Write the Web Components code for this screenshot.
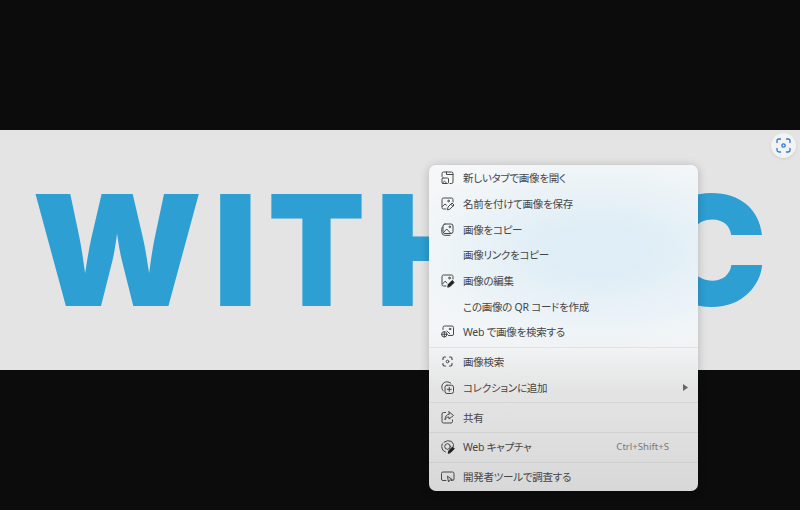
<!DOCTYPE html>
<html lang="ja"><head><meta charset="utf-8"><title>Context menu</title>
<style>
html,body{margin:0;height:100%;background:#0c0c0c}
body{overflow:hidden;font-family:"Noto Sans","Noto Sans CJK JP",sans-serif}
</style></head><body>
<image-page></image-page>
<template id="t-page"><style>
:host{display:flex;flex-direction:column;width:800px;height:510px;position:relative;overflow:hidden;background:#0c0c0c}
.pad{height:130px;flex:none}
.banner{height:240px;flex:none;background:#e4e4e4;box-sizing:border-box;padding:0 0 0 32px;display:flex;align-items:center}
.word{display:flex;align-items:center;font:900 153.500px/1 Inter,"Liberation Sans",sans-serif;color:#2d9fd3;margin-top:2px}
.word span{display:block}
.lens{position:absolute;left:771px;top:133px}
context-menu{position:absolute;left:429px;top:165px}
</style>
<div class="pad"></div>
<div class="banner"><div class="word"><span style="transform:scaleX(1.025);transform-origin:4px 0">W</span><span style="margin-left:15px">I</span><span style="margin-left:9px;transform:scaleX(.93);transform-origin:8px 0">T</span><span style="margin-left:3px">H</span><span style="width:162px"></span><span>C</span></div></div>
<lens-button class="lens"></lens-button>
<context-menu></context-menu>
</template>
<template id="t-lens"><style>
:host{display:flex;width:25px;height:25px;border-radius:50%;background:#f3f3f3;align-items:center;justify-content:center;box-shadow:0 1px 3px rgba(0,0,0,.1)}
svg{display:block}
</style><svg width="15" height="15" viewBox="0 0 15 15" fill="none" stroke="#2b78cf" stroke-width="1.300" stroke-linecap="round"><path d="M1 4.500V3a2 2 0 0 1 2-2h1.500M10.500 1H12a2 2 0 0 1 2 2v1.500M14 10.500V12a2 2 0 0 1-2 2h-1.500M4.500 14H3a2 2 0 0 1-2-2v-1.500"/><circle cx="7.500" cy="7.500" r="1.700"/></svg></template>
<template id="t-menu"><style>
:host{display:block;width:269px;height:326px;box-sizing:border-box;border-radius:7px;position:relative;overflow:hidden;
background:
radial-gradient(ellipse 200px 100px at 170px 85px,rgba(222,237,246,.95) 25%,rgba(222,237,246,0) 100%),
linear-gradient(#f5f7f8 0,#f3f6f8 165px,#f0f2f3 185px,#e4e4e4 225px,#d8d8d8 326px);
box-shadow:0 1px 10px rgba(0,0,0,.22)}
</style><slot></slot></template>
<template id="t-item"><style>
:host{display:flex;align-items:center;height:25.700px;padding-left:11px;padding-right:10px;font-size:10.500px;letter-spacing:-.25px;color:#464646;font-feature-settings:"palt"}
.i{width:15px;height:15px;flex:none;margin-right:8px}
.l{flex:1;white-space:nowrap}
.r{font:9.600px "Noto Sans",sans-serif;letter-spacing:0;color:#777}
svg{display:block}
</style><span class="i"><slot name="icon"></slot></span><span class="l"><slot></slot></span><span class="r"><slot name="end"></slot></span></template>
<template id="t-sep"><style>:host{display:block;height:1px;background:rgba(0,0,0,.06);margin:2px 0 1px}</style></template>
<script>
const mk=(n,id)=>customElements.define(n,class extends HTMLElement{constructor(){super();this.attachShadow({mode:"open"}).append(document.getElementById(id).content.cloneNode(true));}});
mk("image-page","t-page");mk("lens-button","t-lens");mk("context-menu","t-menu");mk("menu-item","t-item");mk("menu-sep","t-sep");
const icon=p=>`<svg slot="icon" width="15" height="15" viewBox="0 0 15 15" fill="none" stroke="#484848" stroke-width="1" stroke-linecap="round" stroke-linejoin="round">${p}</svg>`;
const icons={
tab:'<path d="M2 6.500V3.500A1.500 1.500 0 0 1 3.500 2H11.500A1.500 1.500 0 0 1 13 3.500V12A1.500 1.500 0 0 1 11.500 13.500H10"/><path d="M6.500 2V4.500H13"/><rect x="2" y="8" width="6.500" height="5.500" rx="1"/><path d="M2.500 13l2-1.800 2 1.800"/>',
save:'<path d="M13 6V3.500A1.500 1.500 0 0 0 11.500 2H3.500A1.500 1.500 0 0 0 2 3.500V11.500A1.500 1.500 0 0 0 3.500 13H6"/><circle cx="8.500" cy="5" r=".8"/><path d="M2.500 10.500l2.500-2.500 1.500 1.300"/><path d="M7.500 13.500l.5-2.500 4-4 2 2-4 4z"/><path d="M10.800 8.200l2 2"/>',
copy:'<path d="M5 2H11A2 2 0 0 1 13 4V9.500A2 2 0 0 1 11 11.500H5A2 2 0 0 1 3 9.500V4A2 2 0 0 1 5 2Z"/><circle cx="9.800" cy="4.800" r=".8"/><path d="M3.500 10.500l3.200-3.500 3.800 4"/><path d="M2.300 5A3 3 0 0 0 1.800 7V10.500A3 3 0 0 0 4.800 13.300H10"/>',
edit:'<path d="M13 6V3.500A1.500 1.500 0 0 0 11.500 2H3.500A1.500 1.500 0 0 0 2 3.500V11.500A1.500 1.500 0 0 0 3.500 13H6"/><circle cx="9.500" cy="5" r=".9"/><path d="M2.500 11l2.500-2.800 2 1.800"/><path d="M7.800 13.800l.6-2.500 3.800-3.800 1.900 1.900-3.800 3.800z" fill="#222" stroke="#222"/>',
web:'<path d="M3 5.500V3.500A1.500 1.500 0 0 1 4.500 2H12A1.500 1.500 0 0 1 13.500 3.500V10A1.500 1.500 0 0 1 12 11.500H8.500"/><circle cx="10" cy="5" r=".8"/><path d="M7 7l2.800 2.800"/><circle cx="4.300" cy="10.300" r="2.700"/><path d="M1.600 10.300h5.400M4.300 7.600v5.400"/>',
lens:'<path d="M3 5.500V4.500A1.500 1.500 0 0 1 4.500 3H5.500M9.500 3H10.500A1.500 1.500 0 0 1 12 4.500V5.500M12 9.500V10.500A1.500 1.500 0 0 1 10.500 12H9.500M5.500 12H4.500A1.500 1.500 0 0 1 3 10.500V9.500" stroke-width="1.200"/><circle cx="7.500" cy="7.500" r="1.300"/>',
coll:'<rect x="5" y="5.200" width="8.500" height="8.300" rx="2"/><path d="M9.250 7.300v4M7.200 9.300h4"/><path d="M3.300 11C1.300 8.800 1.300 5.200 3.300 3.300 5 1.500 8.500 1.200 10.800 3.200"/>',
share:'<path d="M5.500 2.500H3.500A1.500 1.500 0 0 0 2 4V11.500A1.500 1.500 0 0 0 3.500 13H11A1.500 1.500 0 0 0 12.500 11.500V10"/><path d="M9 1.800l4.500 3.700L9 9V7C7 7 5.800 8 5 9.800 5 7 6.500 4.300 9 4.200z"/>',
capture:'<path d="M4 3.200L7.500 1.800 11.500 2.300 13.500 5.500 13.300 7.500M5.500 13L2.800 11.200 1.700 7.500 2.300 4.800"/><circle cx="7.500" cy="7.500" r="2.800"/><path d="M8.300 14l.5-2.300 3.700-3.700 1.800 1.800-3.700 3.700z" fill="#222" stroke="#222"/>',
dev:'<path d="M6 11.500H3A1.500 1.500 0 0 1 1.500 10V4.500A1.500 1.500 0 0 1 3 3H12.500A1.500 1.500 0 0 1 14 4.500V10A1.500 1.500 0 0 1 12.500 11.500H11.500"/><path d="M7.500 7.500l1 5.500 1.200-2 2.300-.3z"/>'};
const rows=[["tab","新しいタブで画像を開く"],["save","名前を付けて画像を保存"],["copy","画像をコピー"],["","画像リンクをコピー"],["edit","画像の編集"],["","この画像の QR コードを作成"],["web","Web で画像を検索する"],0,["lens","画像検索"],["coll","コレクションに追加","arrow"],0,["share","共有"],0,["capture","Web キャプチャ","Ctrl+Shift+S"],0,["dev","開発者ツールで調査する"]];
const menu=document.querySelector("image-page").shadowRoot.querySelector("context-menu");
for(const r of rows){
 if(!r){menu.append(document.createElement("menu-sep"));continue}
 const m=document.createElement("menu-item");
 let h=r[0]?icon(icons[r[0]]):"";
 h+=`<span>${r[1]}</span>`;
 if(r[2]==="arrow")h+='<svg slot="end" width="5" height="7" viewBox="0 0 5 7" style="display:block"><path d="M0 0l5 3.500-5 3.500z" fill="#666"/></svg>';
 else if(r[2])h+=`<span slot="end" style="margin-right:19px">${r[2]}</span>`;
 m.innerHTML=h;menu.append(m);
}
</script>
</body></html>
